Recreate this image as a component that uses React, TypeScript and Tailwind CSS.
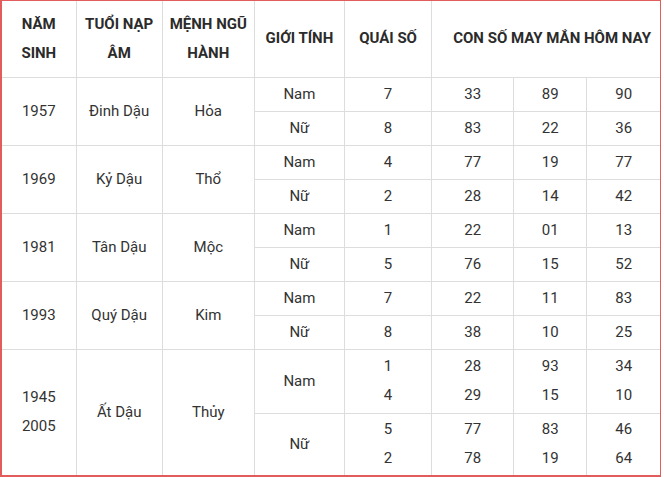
type Row = {
  gender: string
  que: string[]
  nums: string[][]
}

type Group = {
  years: string[]
  tuoi: string
  menh: string
  rows: Row[]
}

const groups: Group[] = [
  {
    years: ['1957'],
    tuoi: 'Đinh Dậu',
    menh: 'Hỏa',
    rows: [
      { gender: 'Nam', que: ['7'], nums: [['33'], ['89'], ['90']] },
      { gender: 'Nữ', que: ['8'], nums: [['83'], ['22'], ['36']] },
    ],
  },
  {
    years: ['1969'],
    tuoi: 'Kỷ Dậu',
    menh: 'Thổ',
    rows: [
      { gender: 'Nam', que: ['4'], nums: [['77'], ['19'], ['77']] },
      { gender: 'Nữ', que: ['2'], nums: [['28'], ['14'], ['42']] },
    ],
  },
  {
    years: ['1981'],
    tuoi: 'Tân Dậu',
    menh: 'Mộc',
    rows: [
      { gender: 'Nam', que: ['1'], nums: [['22'], ['01'], ['13']] },
      { gender: 'Nữ', que: ['5'], nums: [['76'], ['15'], ['52']] },
    ],
  },
  {
    years: ['1993'],
    tuoi: 'Quý Dậu',
    menh: 'Kim',
    rows: [
      { gender: 'Nam', que: ['7'], nums: [['22'], ['11'], ['83']] },
      { gender: 'Nữ', que: ['8'], nums: [['38'], ['10'], ['25']] },
    ],
  },
  {
    years: ['1945', '2005'],
    tuoi: 'Ất Dậu',
    menh: 'Thủy',
    rows: [
      { gender: 'Nam', que: ['1', '4'], nums: [['28', '29'], ['93', '15'], ['34', '10']] },
      { gender: 'Nữ', que: ['5', '2'], nums: [['77', '78'], ['83', '19'], ['46', '64']] },
    ],
  },
]

const cell = 'border border-[#dddddd] text-center align-middle p-0'

function Lines({ items }: { items: string[] }) {
  return (
    <>
      {items.map((t, i) => (
        <div key={i}>{t}</div>
      ))}
    </>
  )
}

export default function App() {
  return (
    <div className="bg-white w-[664px] h-[477px]">
      <div
        className="w-[661px] h-[477px] border-l-2 border-t border-r border-b-2 border-[#e25c5c] text-[15px] leading-[29px] text-[#333333]"
        style={{ fontFamily: 'Roboto, "Liberation Sans", sans-serif' }}
      >
        <table className="w-full table-fixed border-collapse border-hidden">
          <colgroup>
            <col className="w-[74px]" />
            <col className="w-[86px]" />
            <col className="w-[92px]" />
            <col className="w-[90px]" />
            <col className="w-[87px]" />
            <col className="w-[82px]" />
            <col className="w-[73px]" />
            <col className="w-[73px]" />
          </colgroup>
          <thead>
            <tr className="h-[76px] font-bold text-[#2b2b2b]">
              <th className={cell}>
                NĂM
                <br />
                SINH
              </th>
              <th className={cell}>
                TUỔI NẠP
                <br />
                ÂM
              </th>
              <th className={cell}>
                MỆNH NGŨ
                <br />
                HÀNH
              </th>
              <th className={cell}>GIỚI TÍNH</th>
              <th className={cell}>QUÁI SỐ</th>
              <th className={`${cell} pl-3`} colSpan={3}>
                CON SỐ MAY MẮN HÔM NAY
              </th>
            </tr>
          </thead>
          <tbody>
            {groups.map((g, gi) =>
              g.rows.map((r, ri) => {
                const tall = r.que.length > 1
                const h = tall ? (ri === 0 ? 'h-[64px]' : 'h-[62px]') : 'h-[34px]'
                return (
                  <tr key={`${gi}-${ri}`} className={h}>
                    {ri === 0 && (
                      <>
                        <td className={cell} rowSpan={g.rows.length}>
                          <Lines items={g.years} />
                        </td>
                        <td className={cell} rowSpan={g.rows.length}>
                          {g.tuoi}
                        </td>
                        <td className={cell} rowSpan={g.rows.length}>
                          {g.menh}
                        </td>
                      </>
                    )}
                    <td className={cell}>{r.gender}</td>
                    <td className={cell}>
                      <Lines items={r.que} />
                    </td>
                    {r.nums.map((n, ni) => (
                      <td key={ni} className={cell}>
                        <Lines items={n} />
                      </td>
                    ))}
                  </tr>
                )
              })
            )}
          </tbody>
        </table>
      </div>
    </div>
  )
}
